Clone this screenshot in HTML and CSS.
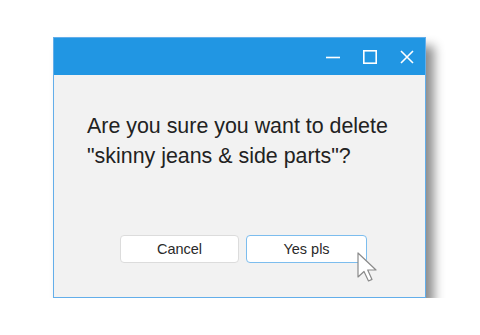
FILE: index.html
```html
<!DOCTYPE html>
<html lang="en">
<head>
  <meta charset="UTF-8">
  <title>Delete dialog</title>
  <link rel="stylesheet" href="styles.css">
</head>
<body>
  <div class="window">
    <div class="titlebar">
      <svg class="ctl" width="16" height="16" viewBox="0 0 16 16"><path d="M1 8.5h14" stroke="#fff" stroke-width="1.6"/></svg>
      <svg class="ctl" width="16" height="16" viewBox="0 0 16 16"><rect x="1.8" y="1.8" width="12.4" height="12.4" fill="none" stroke="#fff" stroke-width="1.6"/></svg>
      <svg class="ctl" width="16" height="16" viewBox="0 0 16 16"><path d="M2 2l12 12M14 2L2 14" stroke="#fff" stroke-width="1.6"/></svg>
    </div>
    <div class="content">
      <p class="question">Are you sure you want to delete<br>"skinny jeans &amp; side parts"?</p>
      <div class="actions">
        <button class="btn">Cancel</button>
        <button class="btn primary">Yes pls
          <svg class="cursor" width="22" height="32" viewBox="0 0 22 32">
            <path d="M1 1v24l6-5.5 4.5 9.5 3.5-1.6-4.3-9.4H19z" fill="#fff" stroke="#8a8a8a" stroke-width="1.2" stroke-linejoin="round"/>
          </svg>
        </button>
      </div>
    </div>
  </div>
</body>
</html>
```

FILE: styles.css
```css
body {
  margin: 0;
  background: #fff;
  font-family: "Liberation Sans", Arial, sans-serif;
}
.window {
  margin: 37px 0 0 53px;
  width: 373px;
  height: 261px;
  box-sizing: border-box;
  border: 1px solid #63aeea;
  display: flex;
  flex-direction: column;
  box-shadow: 8px 9px 10px rgba(0, 0, 0, 0.45);
}
.titlebar {
  height: 37px;
  background: #2196e3;
  display: flex;
  justify-content: flex-end;
  align-items: center;
  gap: 21px;
  padding: 0 10px 0 0;
}
.content {
  flex: 1;
  background: #f2f2f2;
  padding: 0 0 34px 33px;
  display: flex;
  flex-direction: column;
}
.question {
  margin: 36px 0 0;
  font-size: 21.4px;
  line-height: 30px;
  color: #222;
}
.actions {
  margin-top: auto;
  display: flex;
  gap: 7px;
  padding-left: 33px;
}
.btn {
  position: relative;
  width: 119px;
  height: 28px;
  background: #fff;
  border: 1px solid #dcdcdc;
  border-radius: 4px;
  font-family: "Liberation Sans", Arial, sans-serif;
  font-size: 14.5px;
  color: #2a2a2a;
  padding: 0;
}
.primary {
  width: 121px;
  border: 1.5px solid #7cbdee;
}
.cursor {
  position: absolute;
  left: 110px;
  top: 16px;
}
```
